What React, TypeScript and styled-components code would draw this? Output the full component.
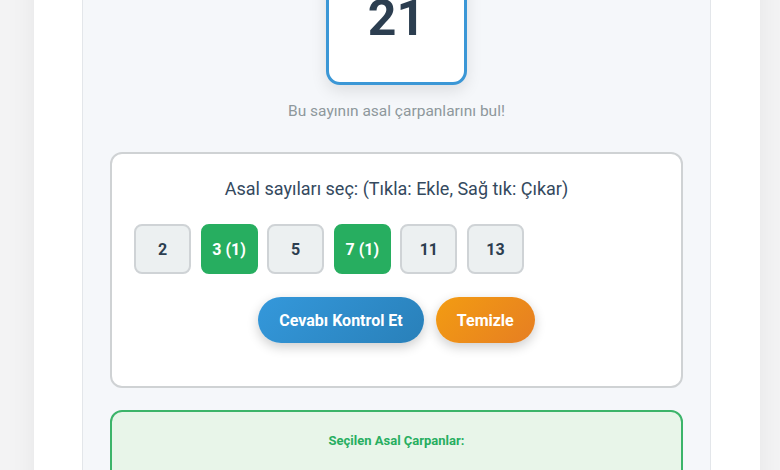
import styled, { createGlobalStyle } from 'styled-components'

const GlobalStyle = createGlobalStyle`
  html, body {
    margin: 0;
    padding: 0;
    background: #f3f3f4;
    font-family: Roboto, "Liberation Sans", Arial, sans-serif;
    overflow: hidden;
  }
`

const primes = [2, 3, 5, 7, 11, 13]
const selected: Record<number, number> = { 3: 1, 7: 1 }

export default function App() {
  return (
    <>
      <GlobalStyle />
      <Page>
        <Card>
          <Panel>
            <NumberBox>21</NumberBox>
            <Hint>Bu sayının asal çarpanlarını bul!</Hint>

            <PickCard>
              <PickTitle>Asal sayıları seç: (Tıkla: Ekle, Sağ tık: Çıkar)</PickTitle>
              <PrimeRow>
                {primes.map((p) => (
                  <PrimeButton key={p} $active={!!selected[p]}>
                    {selected[p] ? `${p} (${selected[p]})` : p}
                  </PrimeButton>
                ))}
              </PrimeRow>
              <Actions>
                <ActionButton $variant="check">Cevabı Kontrol Et</ActionButton>
                <ActionButton $variant="clear">Temizle</ActionButton>
              </Actions>
            </PickCard>

            <ResultBox>
              <ResultTitle>Seçilen Asal Çarpanlar:</ResultTitle>
            </ResultBox>
          </Panel>
        </Card>
      </Page>
    </>
  )
}

const Page = styled.div`
  height: 470px;
  overflow: hidden;
  padding-left: 34px;
`

const Card = styled.div`
  margin-top: -69px;
  width: 726px;
  height: 600px;
  background: #fff;
  box-shadow: 0 0 24px rgba(0, 0, 0, 0.06);
  padding: 0 49px 0 48px;
  box-sizing: border-box;
`

const Panel = styled.div`
  padding: 20px 27px 40px;
  height: 100%;
  box-sizing: border-box;
  background: #f5f7fa;
  border-left: 1px solid #e3e6ea;
  border-right: 1px solid #e3e6ea;
  display: flex;
  flex-direction: column;
  align-items: center;
`

const NumberBox = styled.div`
  width: 141px;
  height: 134px;
  flex-shrink: 0;
  box-sizing: border-box;
  border: 3px solid #3b97d6;
  border-radius: 14px;
  background: #fff;
  box-shadow: 0 6px 16px rgba(0, 0, 0, 0.1);
  display: flex;
  align-items: center;
  justify-content: center;
  font-size: 50px;
  font-weight: 700;
  color: #2c3e50;
`

const Hint = styled.p`
  margin: 17px 0 0;
  font-size: 15.5px;
  line-height: 19px;
  color: #8e989c;
`

const PickCard = styled.div`
  margin-top: 31px;
  width: 100%;
  box-sizing: border-box;
  background: #fff;
  border: 2px solid #cfd2d4;
  border-radius: 12px;
  padding: 24px 22px 43px;
`

const PickTitle = styled.div`
  text-align: center;
  font-size: 18px;
  line-height: 22px;
  color: #34495e;
`

const PrimeRow = styled.div`
  display: flex;
  flex-wrap: wrap;
  gap: 9.6px;
  margin-top: 24px;
`

const PrimeButton = styled.button<{ $active: boolean }>`
  width: 57px;
  height: 50px;
  box-sizing: border-box;
  border-radius: 8px;
  border: 2px solid ${(p) => (p.$active ? '#27ae60' : '#cfd3d6')};
  background: ${(p) => (p.$active ? '#27ae60' : '#ecf0f1')};
  color: ${(p) => (p.$active ? '#fff' : '#2c3e50')};
  font-family: inherit;
  font-size: 16px;
  font-weight: 700;
  padding: 0;
`

const Actions = styled.div`
  display: flex;
  justify-content: center;
  gap: 12px;
  margin-top: 23px;
`

const ActionButton = styled.button<{ $variant: 'check' | 'clear' }>`
  height: 46px;
  border: none;
  border-radius: 23px;
  padding: 0 21px;
  background: ${(p) =>
    p.$variant === 'check'
      ? 'linear-gradient(135deg, #3498db, #2980b9)'
      : 'linear-gradient(135deg, #f39c12, #e67e22)'};
  box-shadow: 0 4px 12px rgba(0, 0, 0, 0.2);
  color: #fff;
  font-family: inherit;
  font-size: 16px;
  font-weight: 700;
`

const ResultBox = styled.div`
  margin-top: 22px;
  width: 100%;
  box-sizing: border-box;
  background: #e8f5e9;
  border: 2px solid #3cb46a;
  border-radius: 12px;
  padding: 21px 20px 40px;
`

const ResultTitle = styled.div`
  text-align: center;
  font-size: 13px;
  font-weight: 700;
  color: #27ae60;
`
